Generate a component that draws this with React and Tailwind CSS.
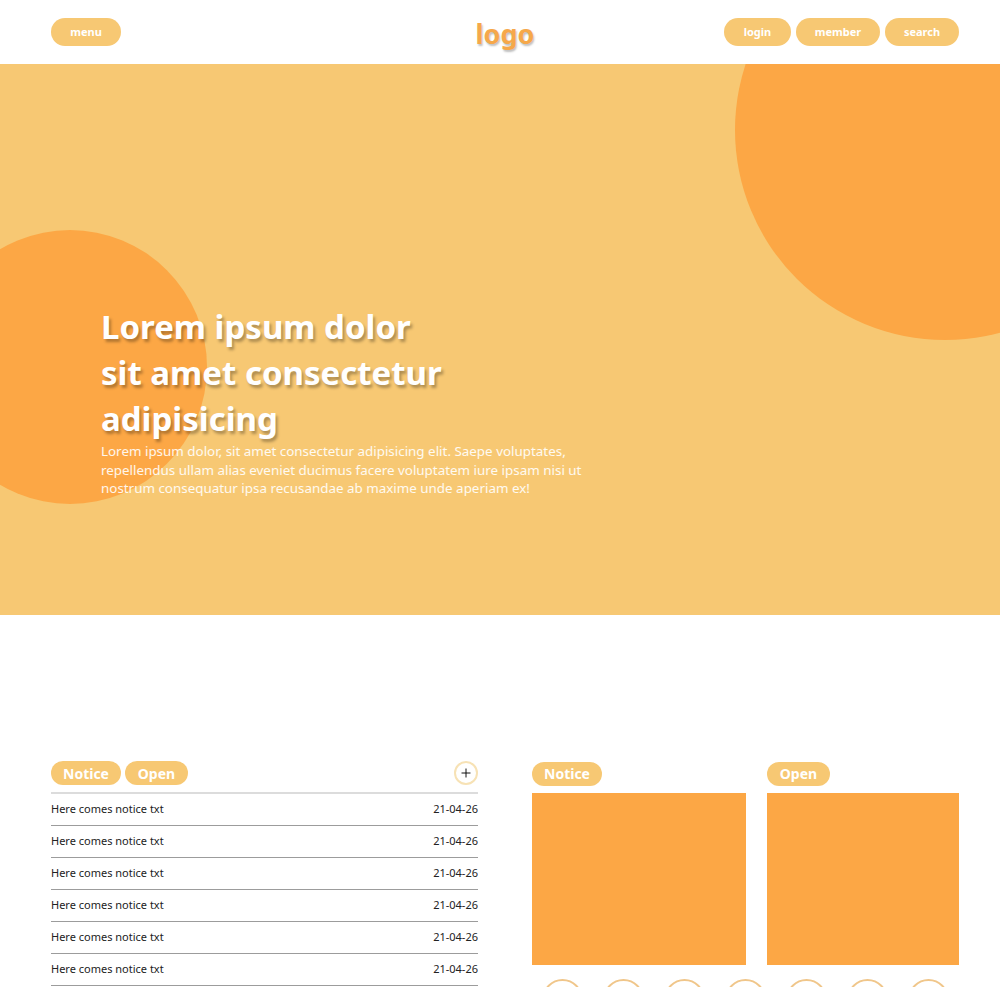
import { Plus } from "lucide-react";

const font = { fontFamily: "'Noto Sans', 'Open Sans', sans-serif" };

function Pill({ children, className = "" }) {
  return (
    <span
      className={`inline-flex items-center justify-center rounded-full bg-[#f7c873] text-white font-bold ${className}`}
    >
      {children}
    </span>
  );
}

export default function App() {
  const rows = Array.from({ length: 6 });
  const dots = Array.from({ length: 7 });

  return (
    <div className="bg-white min-h-[987px] overflow-hidden" style={font}>
      {/* Header */}
      <header className="h-16 flex items-center pl-[51px] pr-[41px]">
        <div className="flex-1 flex">
          <Pill className="w-[70px] h-7 text-[11px]">menu</Pill>
        </div>
        <div className="text-[27px] font-bold text-[#f6a84a] leading-none pt-[2px] [text-shadow:1px_2px_2px_rgba(0,0,0,0.25)]">
          logo
        </div>
        <div className="flex-1 flex justify-end gap-[5px]">
          <Pill className="w-[67px] h-7 text-[11px]">login</Pill>
          <Pill className="w-[84px] h-7 text-[11px]">member</Pill>
          <Pill className="w-[74px] h-7 text-[11px]">search</Pill>
        </div>
      </header>

      {/* Hero */}
      <section className="relative h-[551px] bg-[#f7c873] overflow-hidden">
        <div className="absolute left-[735px] top-[-144px] w-[420px] h-[420px] rounded-full bg-[#fca745]" />
        <div className="absolute left-[-67px] top-[166px] w-[274px] h-[274px] rounded-full bg-[#fca745]" />
        <div className="relative pl-[101px] pt-[240px]">
          <h1 className="text-[33px] font-bold leading-[46px] text-white [text-shadow:2px_3px_3px_rgba(0,0,0,0.3)]">
            Lorem ipsum dolor
            <br />
            sit amet consectetur
            <br />
            adipisicing
          </h1>
          <p className="w-[490px] text-[13.4px] leading-[18.5px] text-white/90">
            Lorem ipsum dolor, sit amet consectetur adipisicing elit. Saepe voluptates,
            repellendus ullam alias eveniet ducimus facere voluptatem iure ipsam nisi ut
            nostrum consequatur ipsa recusandae ab maxime unde aperiam ex!
          </p>
        </div>
      </section>

      {/* Board */}
      <section className="pt-[146px] pl-[51px] pr-[41px] grid grid-cols-2 gap-[54px]">
        <div>
          <div className="flex items-center h-6 gap-1">
            <Pill className="w-[70px] h-6 text-[14px]">Notice</Pill>
            <Pill className="w-[63px] h-6 text-[14px]">Open</Pill>
            <button className="ml-auto w-6 h-6 rounded-full border-2 border-[#f7e2b5] flex items-center justify-center text-black">
              <Plus size={14} strokeWidth={1.6} />
            </button>
          </div>
          <ul className="mt-[7px] border-t-2 border-[#dcdcdc]">
            {rows.map((_, i) => (
              <li
                key={i}
                className="h-8 flex items-center justify-between border-b border-[#9c9c9c] text-[11px] text-[#222]"
              >
                <span>Here comes notice txt</span>
                <span>21-04-26</span>
              </li>
            ))}
          </ul>
        </div>

        <div>
          <div className="flex gap-[21px]">
            <div className="w-[214px]">
              <Pill className="w-[70px] h-6 text-[14px]">Notice</Pill>
              <div className="mt-[7px] h-[172px] bg-[#fca745]" />
            </div>
            <div className="w-[192px]">
              <Pill className="w-[63px] h-6 text-[14px]">Open</Pill>
              <div className="mt-[7px] h-[172px] bg-[#fca745]" />
            </div>
          </div>
          <div className="mt-[14px] pl-[10px] flex gap-[20px]">
            {dots.map((_, i) => (
              <span key={i} className="w-[41px] h-[41px] rounded-full border-2 border-[#f0c68a]" />
            ))}
          </div>
        </div>
      </section>
    </div>
  );
}
